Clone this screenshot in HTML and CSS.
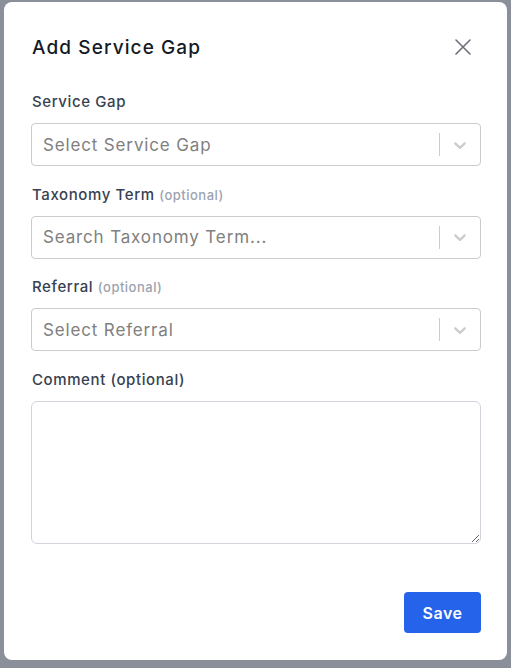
FILE: index.html
```html
<!DOCTYPE html>
<html lang="en">
<head>
<meta charset="utf-8">
<title>Add Service Gap</title>
<link rel="stylesheet" href="styles.css">
</head>
<body>
<div class="backdrop">
  <div class="modal">
    <div class="modal-header">
      <h2 class="modal-title">Add Service Gap</h2>
      <button class="close-btn" aria-label="Close">
        <svg width="16" height="16" viewBox="0 0 16 16"><path d="M1 1L15 15M15 1L1 15" stroke="#6b6f76" stroke-width="1.6" fill="none" stroke-linecap="round"/></svg>
      </button>
    </div>
    <div class="modal-body">
      <div class="field">
        <label class="label">Service Gap</label>
        <div class="select">
          <span class="placeholder">Select Service Gap</span>
          <span class="separator"></span>
          <span class="indicator"><svg width="20" height="20" viewBox="0 0 20 20"><path fill="#ccc" d="M4.516 7.548c0.436-0.446 1.043-0.481 1.576 0l3.908 3.747 3.908-3.747c0.533-0.481 1.141-0.446 1.574 0 0.436 0.445 0.408 1.197 0 1.615-0.406 0.418-4.695 4.502-4.695 4.502-0.217 0.223-0.502 0.335-0.787 0.335s-0.57-0.112-0.789-0.335c0 0-4.287-4.084-4.695-4.502s-0.436-1.17 0-1.615z"/></svg></span>
        </div>
      </div>
      <div class="field">
        <label class="label">Taxonomy Term <span class="optional">(optional)</span></label>
        <div class="select">
          <span class="placeholder">Search Taxonomy Term...</span>
          <span class="separator"></span>
          <span class="indicator"><svg width="20" height="20" viewBox="0 0 20 20"><path fill="#ccc" d="M4.516 7.548c0.436-0.446 1.043-0.481 1.576 0l3.908 3.747 3.908-3.747c0.533-0.481 1.141-0.446 1.574 0 0.436 0.445 0.408 1.197 0 1.615-0.406 0.418-4.695 4.502-4.695 4.502-0.217 0.223-0.502 0.335-0.787 0.335s-0.57-0.112-0.789-0.335c0 0-4.287-4.084-4.695-4.502s-0.436-1.170 0-1.615z"/></svg></span>
        </div>
      </div>
      <div class="field">
        <label class="label">Referral <span class="optional">(optional)</span></label>
        <div class="select">
          <span class="placeholder">Select Referral</span>
          <span class="separator"></span>
          <span class="indicator"><svg width="20" height="20" viewBox="0 0 20 20"><path fill="#ccc" d="M4.516 7.548c0.436-0.446 1.043-0.481 1.576 0l3.908 3.747 3.908-3.747c0.533-0.481 1.141-0.446 1.574 0 0.436 0.445 0.408 1.197 0 1.615-0.406 0.418-4.695 4.502-4.695 4.502-0.217 0.223-0.502 0.335-0.787 0.335s-0.57-0.112-0.789-0.335c0 0-4.287-4.084-4.695-4.502s-0.436-1.170 0-1.615z"/></svg></span>
        </div>
      </div>
      <div class="field">
        <label class="label">Comment (optional)</label>
        <textarea class="textarea"></textarea>
      </div>
    </div>
    <div class="modal-footer">
      <button class="save-btn">Save</button>
    </div>
  </div>
</div>
</body>
</html>
```

FILE: styles.css
```css
* { box-sizing: border-box; }
html, body {
  margin: 0;
  padding: 0;
  height: 100%;
}
body {
  background: #8b8f9a;
  font-family: Inter, "Noto Sans", sans-serif;
}
.backdrop {
  padding: 2px 4px 8px 4px;
}
.modal {
  width: 503px;
  height: 658px;
  background: #fff;
  border-radius: 8px;
  display: flex;
  flex-direction: column;
  padding: 0 26px 0 27px;
}
.modal-header {
  display: flex;
  align-items: center;
  justify-content: space-between;
  height: 89px;
  padding-top: 1px;
}
.modal-title {
  margin: 0;
  font-size: 19px;
  font-weight: 500;
  letter-spacing: 1.1px;
  color: #141a26;
  padding-left: 1px;
}
.close-btn {
  background: none;
  border: 0;
  padding: 0;
  margin-right: 10px;
  width: 16px;
  height: 16px;
  display: flex;
}
.modal-body {
  display: flex;
  flex-direction: column;
  gap: 17.5px;
}
.field {
  display: flex;
  flex-direction: column;
  gap: 10px;
}
.label {
  font-size: 15px;
  line-height: 22px;
  font-weight: 500;
  letter-spacing: 0.6px;
  color: #374151;
  padding-left: 1px;
}
.optional {
  font-size: 13px;
  letter-spacing: 0.5px;
  color: #9ca3af;
}
.select {
  height: 43px;
  border: 1px solid #ccc;
  border-radius: 4px;
  display: flex;
  align-items: center;
}
.placeholder {
  flex: 1;
  padding-left: 11px;
  font-size: 17px;
  letter-spacing: 0.85px;
  color: #808080;
}
.separator {
  width: 1px;
  align-self: stretch;
  margin: 9px 0;
  background: #ccc;
}
.indicator {
  width: 40px;
  display: flex;
  justify-content: center;
  align-items: center;
}
.textarea {
  height: 143px;
  border: 1px solid #d1d5db;
  border-radius: 6px;
  resize: vertical;
  font-family: inherit;
}
.modal-footer {
  margin-top: auto;
  padding-bottom: 27px;
  display: flex;
  justify-content: flex-end;
}
.save-btn {
  width: 77px;
  height: 41px;
  background: #2563eb;
  color: #fff;
  border: 0;
  border-radius: 4px;
  font-family: inherit;
  font-size: 16px;
  font-weight: 600;
  letter-spacing: 0.5px;
}
```
